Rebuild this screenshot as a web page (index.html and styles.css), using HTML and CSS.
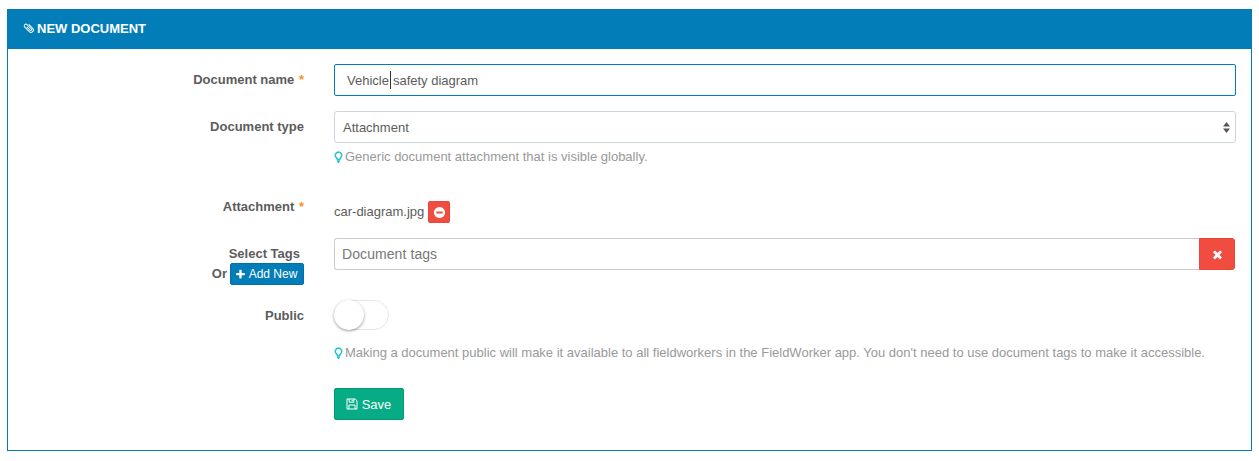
FILE: index.html
```html
<!DOCTYPE html>
<html lang="en">
<head>
<meta charset="utf-8">
<title>New document</title>
<link rel="stylesheet" href="styles.css">
</head>
<body>
<section class="panel">
  <header class="panel-head">
    <svg class="clip" viewBox="0 0 12 12"><path d="M8.4 3.2v5.6a2.4 2.4 0 0 1-4.8 0V2.4a1.7 1.7 0 0 1 3.4 0v6a.9.9 0 0 1-1.8 0V3.6" transform="rotate(-45 6 6)"/></svg>
    <span>NEW DOCUMENT</span>
  </header>
  <form class="form">
    <div class="row row-name">
      <div class="label">Document name <span class="req">*</span></div>
      <div class="control">
        <div class="input focus"><span>Vehicle</span><i class="caret"></i><span>safety diagram</span></div>
      </div>
    </div>
    <div class="row row-type">
      <div class="label">Document type</div>
      <div class="control">
        <div class="input select">
          <span>Attachment</span>
          <svg class="updown" viewBox="0 0 7 11"><path d="M3.5 0 7 4.4H0zM3.5 11 0 6.6h7z"/></svg>
        </div>
        <p class="help help-type">
          <svg class="bulb" viewBox="0 0 10 14"><path class="bulb-glass" d="M5 1a3.6 3.6 0 0 0-2.2 6.4c.6.6.8 1.2.9 1.8h2.6c.1-.6.3-1.2.9-1.8A3.6 3.6 0 0 0 5 1z"/><path class="bulb-base" d="M3.5 10h3v1.6l-1 1.4h-1l-1-1.4z"/></svg>Generic document attachment that is visible globally.
        </p>
      </div>
    </div>
    <div class="row row-file">
      <div class="label">Attachment <span class="req">*</span></div>
      <div class="control file">
        <span class="file-name">car-diagram.jpg</span>
        <button type="button" class="remove">
          <svg class="ico-minus" viewBox="0 0 1792 1792"><path d="M1344 960v-128q0-26-19-45t-45-19h-768q-26 0-45 19t-19 45v128q0 26 19 45t45 19h768q26 0 45-19t19-45zm320-64q0 209-103 385.5t-279.5 279.5-385.5 103-385.5-103-279.5-279.5-103-385.5 103-385.5 279.5-279.5 385.5-103 385.5 103 279.5 279.5 103 385.5z"/></svg>
        </button>
      </div>
    </div>
    <div class="row row-tags">
      <div class="label label-tags">
        <div class="tags-title">Select Tags</div>
        <div class="tags-or">Or <button type="button" class="add">
          <svg class="ico-plus" viewBox="0 0 1792 1792"><path d="M1600 736v192q0 40-28 68t-68 28h-416v416q0 40-28 68t-68 28h-192q-40 0-68-28t-28-68v-416h-416q-40 0-68-28t-28-68v-192q0-40 28-68t68-28h416v-416q0-40 28-68t68-28h192q40 0 68 28t28 68v416h416q40 0 68 28t28 68z"/></svg>Add New</button></div>
      </div>
      <div class="control tags">
        <div class="tags-input">Document tags</div>
        <button type="button" class="clear">
          <svg class="ico-x" viewBox="0 0 1792 1792"><path d="M1490 1322q0 40-28 68l-136 136q-28 28-68 28t-68-28l-294-294-294 294q-28 28-68 28t-68-28l-136-136q-28-28-28-68t28-68l294-294-294-294q-28-28-28-68t28-68l136-136q28-28 68-28t68 28l294 294 294-294q28-28 68-28t68 28l136 136q28 28 28 68t-28 68l-294 294 294 294q28 28 28 68z"/></svg>
        </button>
      </div>
    </div>
    <div class="row row-public">
      <div class="label label-public">Public</div>
      <div class="control">
        <div class="switch"><span class="knob"></span></div>
        <p class="help help-public">
          <svg class="bulb" viewBox="0 0 10 14"><path class="bulb-glass" d="M5 1a3.6 3.6 0 0 0-2.2 6.4c.6.6.8 1.2.9 1.8h2.6c.1-.6.3-1.2.9-1.8A3.6 3.6 0 0 0 5 1z"/><path class="bulb-base" d="M3.5 10h3v1.6l-1 1.4h-1l-1-1.4z"/></svg>Making a document public will make it available to all fieldworkers in the FieldWorker app. You don't need to use document tags to make it accessible.
        </p>
      </div>
    </div>
    <div class="row row-save">
      <div class="label"></div>
      <div class="control">
        <button type="button" class="save">
          <svg class="floppy" viewBox="0 0 12 12"><path d="M1 1h8.2L11 2.8V11H1z"/><path d="M3.2 1v3.2h4.6V1M6.2 1.8v1.6M3 11V7h6v4"/></svg>Save
        </button>
      </div>
    </div>
  </form>
</section>
</body>
</html>
```
FILE: styles.css
```css
* { box-sizing: border-box; }
html, body { margin: 0; background: #fff; }
body {
  padding: 9px 7px 10px 7px;
  font-family: "Liberation Sans", Arial, sans-serif;
  font-size: 13px;
  color: #5c5c5c;
}
.panel {
  width: 1245px;
  height: 442px;
  border: 1px solid #027db8;
  border-top: 0;
}
.panel-head {
  height: 40px;
  margin: 0 -1px;
  padding: 0 16px 2px;
  background: #027db8;
  color: #fff;
  font-weight: 700;
  font-size: 13px;
  display: flex;
  align-items: center;
  gap: 2px;
}
.clip { width: 12px; height: 12px; fill: none; stroke: #fff; stroke-width: 1; overflow: visible; }
.form { padding: 15px 15px 0 0; }
.row { display: flex; margin-bottom: 15px; }
.label {
  width: 296px;
  flex: none;
  text-align: right;
  font-weight: 700;
  color: #5c5c5c;
  line-height: 32px;
}
.req { color: #f7941d; margin-left: 1px; }
.control { flex: 1; margin-left: 30px; min-width: 0; }
.input {
  height: 32px;
  border: 1px solid #ccd5dd;
  border-radius: 3px;
  display: flex;
  align-items: center;
  background: #fff;
}
.input.focus { border-color: #027db8; padding-left: 12px; border-radius: 2px; }
.caret { width: 1px; height: 18px; background: #333; margin: 0 2px 0 1px; }
.select { justify-content: space-between; padding: 0 5px 0 8px; }
.updown { width: 7px; height: 11px; fill: #555; }
.help { margin: 0; color: #999; line-height: 16px; display: flex; align-items: center; white-space: nowrap; }
.help-type { margin-top: 6px; }
.bulb { width: 9px; height: 13px; margin-right: 2px; flex: none; }
.bulb-glass { fill: none; stroke: #25c2d8; stroke-width: 1.7; }
.bulb-base { fill: #25c2d8; }
.row-type { height: 75px; margin-bottom: 15px; }
.row-file { height: 22px; margin-bottom: 15px; }
.row-file .label { line-height: 12px; }
.file { display: flex; align-items: center; gap: 4px; }
.file-name { margin-bottom: 2px; }
.remove {
  width: 22px;
  height: 22px;
  padding: 0;
  border: 1px solid #e8473a;
  border-radius: 2px;
  background: #f04c40;
  display: flex;
  align-items: center;
  justify-content: center;
}
.ico-minus { width: 13px; height: 13px; fill: #fff; }
.row-tags { height: 48px; margin-bottom: 13px; }
.label-tags { line-height: 16px; padding-top: 8px; }
.tags-title { padding-right: 4px; }
.tags-or { display: flex; justify-content: flex-end; align-items: center; gap: 3px; margin-top: 1px; }
.add {
  height: 22px;
  width: 74px;
  padding: 0 2px 0 0;
  border: 1px solid #0270a6;
  border-radius: 2px;
  background: #027db8;
  color: #fff;
  font: 12px "Liberation Sans", Arial, sans-serif;
  display: flex;
  align-items: center;
  justify-content: center;
  gap: 3px;
}
.ico-plus { width: 11px; height: 11px; fill: #fff; }
.tags { display: flex; height: 32px; margin-right: 1px; }
.tags-input {
  flex: 1;
  border: 1px solid #ccc;
  border-right: 0;
  border-radius: 3px 0 0 3px;
  padding-left: 7px;
  line-height: 30px;
  font-size: 14px;
  letter-spacing: .08px;
  color: #777;
}
.clear {
  width: 36px;
  padding: 0;
  border: 1px solid #e8473a;
  border-radius: 0 3px 3px 0;
  background: #f04c40;
  display: flex;
  align-items: center;
  justify-content: center;
}
.ico-x { width: 13px; height: 13px; fill: #fff; }
.label-public { line-height: 34px; }
.row-public { margin-bottom: 27px; }
.switch {
  width: 55px;
  height: 30px;
  margin-top: 1px;
  border: 1px solid #e6e6e6;
  border-radius: 15px;
  background: #fff;
  position: relative;
}
.knob {
  position: absolute;
  left: -1px;
  top: -1px;
  width: 30px;
  height: 30px;
  border-radius: 50%;
  background: #fff;
  box-shadow: 0 1px 3px rgba(0, 0, 0, .4);
}
.help-public { margin-top: 15px; }
.save {
  width: 70px;
  height: 32px;
  padding: 0 1px 0 0;
  border: 1px solid #029a72;
  border-radius: 2px;
  background: #05ac85;
  color: #fff;
  font: 13px "Liberation Sans", Arial, sans-serif;
  display: flex;
  align-items: center;
  justify-content: center;
  gap: 4px;
}
.floppy { width: 12px; height: 12px; fill: none; stroke: #fff; stroke-width: 1; }
```
